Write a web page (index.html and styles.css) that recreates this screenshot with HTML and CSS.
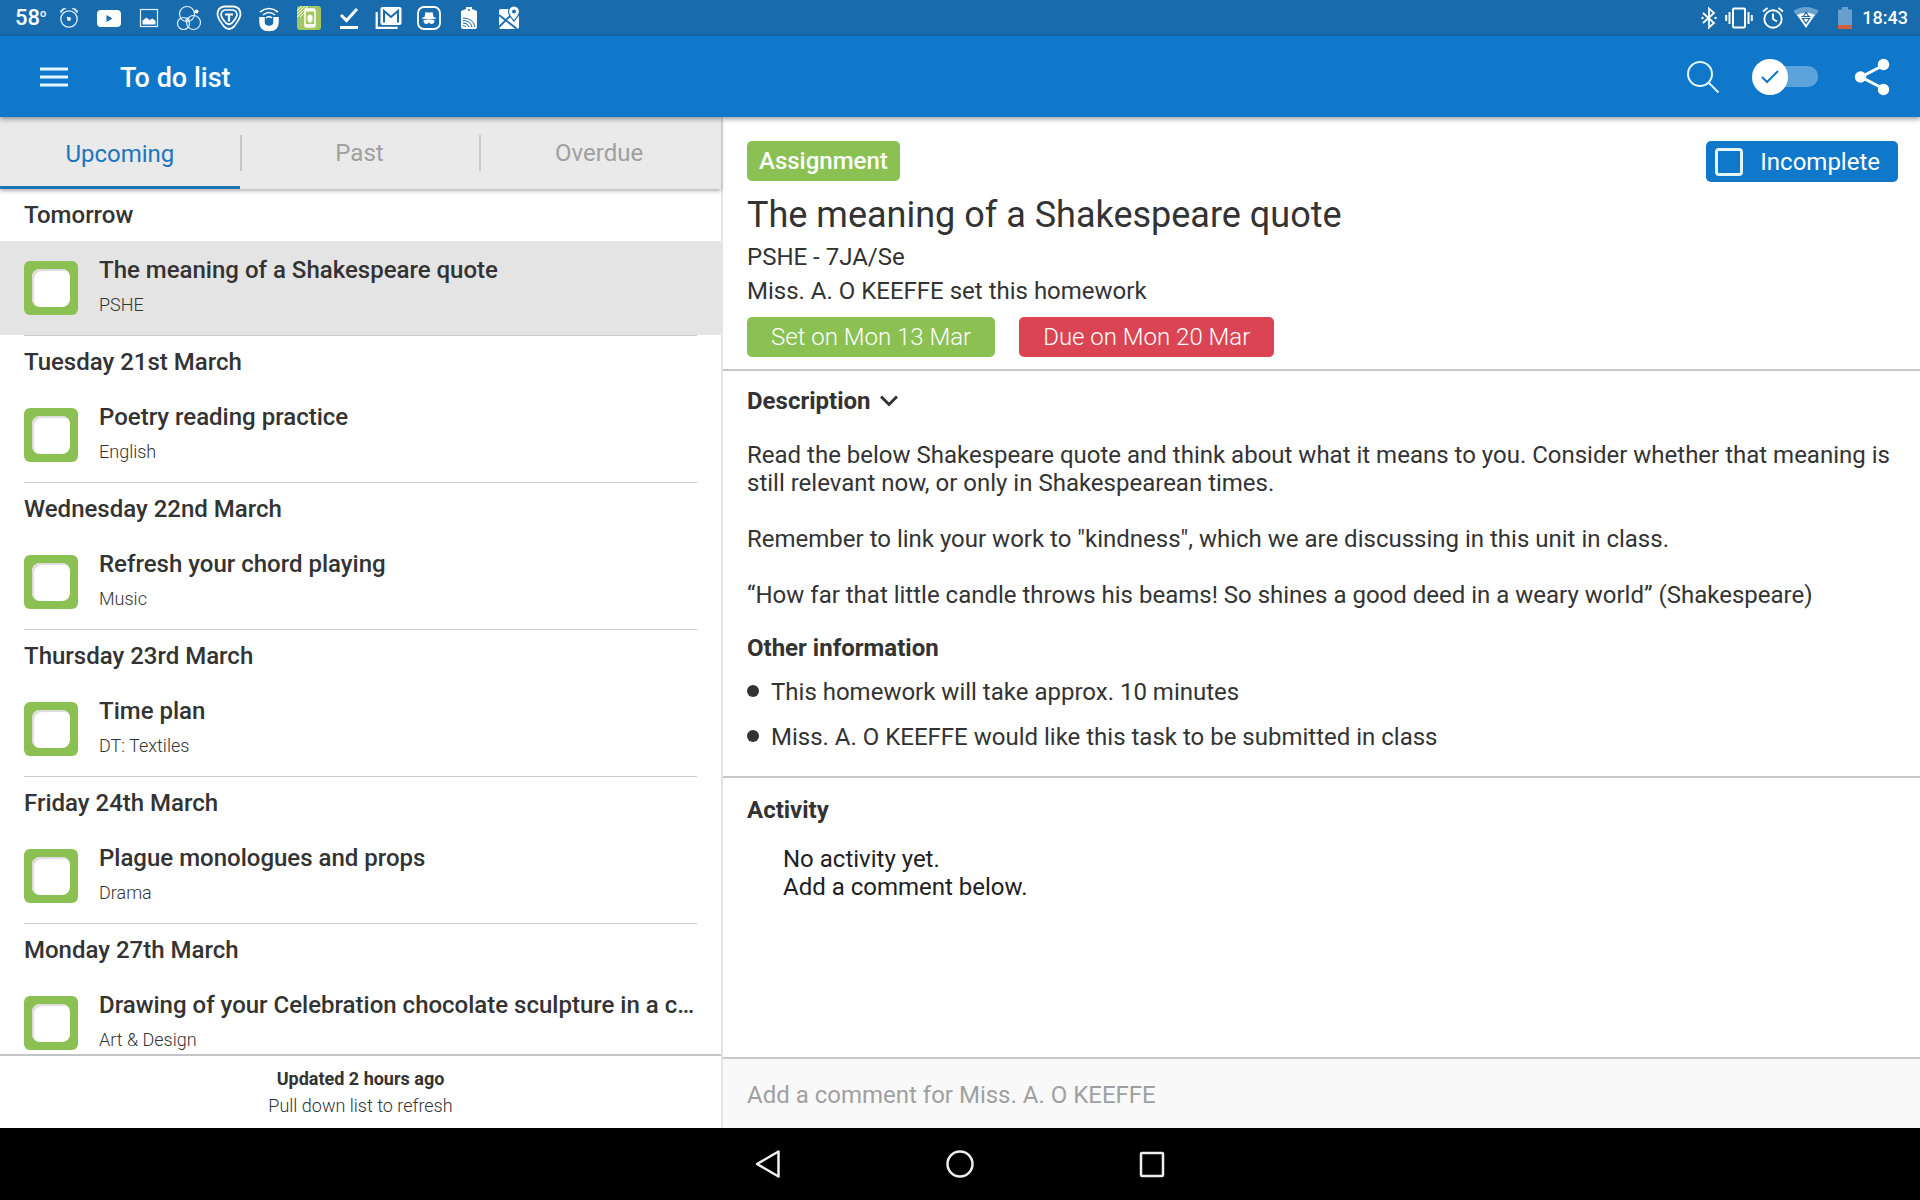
FILE: index.html
```
<!DOCTYPE html>
<html lang="en">
<head>
  <meta charset="UTF-8">
  <meta name="viewport" content="width=device-width, initial-scale=1.0">
  <title>To do list</title>
  <link rel="stylesheet" href="styles.css">
</head>
<body>
  <!-- System status bar -->
  <div class="status-bar">
    <div class="status-left">
      <span class="status-temp">58<sup>o</sup></span>
      <svg width="24" height="24" viewBox="0 0 24 24" fill="none" stroke="#dff1fb" stroke-width="1.3"><circle cx="12" cy="13" r="8.2"/><path d="M4 6l3-3M20 6l-3-3M5 4q1-2 4-1M19 4q-1-2-4-1M4 7V4M20 7V4M10 11l3 3"/><circle cx="12" cy="13" r="1.3" fill="#fff"/></svg>
      <svg width="24" height="24" viewBox="0 0 24 24"><rect y="4" width="24" height="17" rx="4" fill="#fff"/><path d="M9.500 9v7l6-3.500z" fill="#186bad"/></svg>
      <svg width="24" height="24" viewBox="0 0 24 24"><rect x="3.500" y="3.500" width="17" height="17" fill="none" stroke="#dff1fb" stroke-width="1.200"/><path d="M5.500 18.500v-4l4-3 3 2.500 3-1.500 3 2.500v3.500z" fill="#fff"/></svg>
      <svg width="26" height="26" viewBox="0 0 26 26" fill="none" stroke="#dff1fb" stroke-width="1.200"><circle cx="11" cy="9" r="7.500"/><circle cx="7.500" cy="18.500" r="6"/><circle cx="17.500" cy="17.500" r="7"/><circle cx="11.500" cy="14.500" r="1.500"/><circle cx="20.500" cy="6.500" r="2" fill="#fff" stroke="none"/></svg>
      <svg width="26" height="26" viewBox="0 0 26 26" fill="none" stroke="#fff" stroke-linejoin="round"><path stroke-width="1.800" d="M8 1.500h10q6.500 1 6.500 8Q24 14 18 21.500q-5 5-10 0Q2 14 1.500 9.500q0-7 6.500-8z"/><path stroke-width="1.700" d="M9 5h8q4 1 4 5-.5 3-5 8-3 2.500-6 0-4.500-5-5-8 0-4 4-5z"/><path stroke-width="2.200" d="M9 9.500h8M13 9.500v7"/></svg>
      <svg width="22" height="28" viewBox="0 0 22 28" fill="none" stroke="#fff"><path stroke-width="5.500" d="M4 13v5q0 6.500 7 6.500t7-6.500v-5"/><path stroke-width="1.600" d="M2 8q9-7 18 0M5 11q6-5 12 0"/><path stroke-width="1.600" d="M8 14q3-2.500 6 0"/></svg>
      <svg width="24" height="24" viewBox="0 0 24 24"><rect width="24" height="24" rx="3" fill="#a3c85f"/><path d="M0 5l5-5M0 8l8-8M0 11l11-11M3 11l5-5" stroke="#fff"/><rect x="8" y="3" width="10" height="18" rx="1.500" fill="#a3c85f" stroke="#fff" stroke-width="1.500"/><path d="M8 4.500h10M8 19h10" stroke="#fff" stroke-width="2"/><path fill="#fff" d="M10.500 10q2.500-3 5 0v5h-1v1.500h-3V15h-1z"/></svg>
      <svg width="24" height="24" viewBox="0 0 24 24" fill="none" stroke="#fff"><path d="M4 9l5.500 5.500L20 3" stroke-width="3"/><path d="M3 21.500h18" stroke-width="3"/></svg>
      <svg width="27" height="24" viewBox="0 0 27 24" fill="none" stroke="#fff"><path d="M1.200 6v15.800h21" stroke-width="2.200"/><path fill="#fff" stroke="none" d="M7 1h17q2 0 2 2v14q0 2-2 2H7q-2 0-2-2V3q0-2 2-2z"/><path d="M8.500 16.500V5l7 6 7-6v11.500" stroke="#186bad" stroke-width="2"/></svg>
      <svg width="24" height="24" viewBox="0 0 24 24"><rect x="1" y="1" width="22" height="22" rx="6" fill="none" stroke="#fff" stroke-width="1.800"/><path fill="#fff" d="M8.500 6q3.500 1 7 0l1 5q3 .5 3 1.500-7.500 1.500-15 0 0-1 3-1.500zM6.500 14q5.500-1 11 0 0 4-3 4-2 0-2.500-2-.5 2-2.500 2-3 0-3-4z"/></svg>
      <svg width="24" height="24" viewBox="0 0 24 24"><path fill="#fff" d="M4 5l5-2V1h6v2l5 2v16q0 2-2 2H6q-2 0-2-2z"/><path fill="none" stroke="#186bad" d="M6 12q10 0 12 9M6 14.500q7.500 0 9 6.500M6 17q5 0 6 4M6 19.500q2 0 3 1.500"/><circle cx="12" cy="4" r="1" fill="#186bad"/></svg>
      <svg width="24" height="24" viewBox="0 0 24 24"><rect x="2" y="3" width="20" height="20" rx="2" fill="#fff"/><path d="M2 9l18 14M2 21L14 9" stroke="#186bad" stroke-width="1.800" fill="none"/><path d="M17 15q-5.500-6-5.500-9.500a5.500 5.500 0 0 1 11 0Q22.500 9 17 15z" fill="#fff" stroke="#186bad" stroke-width="1.200"/><circle cx="17" cy="5.500" r="2" fill="#186bad"/></svg>
    </div>
    <div class="status-right">
      <svg width="16" height="24" viewBox="0 0 16 24" fill="none" stroke="#fff" stroke-width="1.800"><path d="M2 7l11 10-5 4.500v-19L13 7 2 17"/><circle cx="1.500" cy="12" r="1.200" fill="#fff" stroke="none"/><circle cx="14.500" cy="12" r="1.200" fill="#fff" stroke="none"/></svg>
      <svg width="28" height="24" viewBox="0 0 28 24" fill="none" stroke="#fff" stroke-width="2"><rect x="8" y="2.500" width="12" height="19" rx="1"/><path d="M4.500 6v12M1.200 9v6M23.500 6v12M26.800 9v6"/></svg>
      <svg width="24" height="24" viewBox="0 0 24 24" fill="none" stroke="#fff" stroke-width="1.900"><circle cx="12" cy="13" r="8.700"/><path d="M12 7.500V13l4 2.500M2 5.500L6.500 2M22 5.500L17.500 2"/></svg>
      <svg width="26" height="24" viewBox="0 0 26 24"><path d="M0 5Q13-3 26 5L13 22z" fill="#689fcc"/><path d="M0 5l4 5h18l4-5 0 19H0z" fill="#186bad"/><path d="M4 9q9-5 18 0l-9 13z" fill="#fff"/><path d="M8.500 10.500h9M9.500 12.500h7L13 17.500zM13 6l-3 5M13 6l3 5" fill="none" stroke="#186bad" stroke-width="1.200"/></svg>
      <svg class="battery" width="16" height="24" viewBox="0 0 16 24"><path d="M1 3.500h4V1h6v2.500h4V19H1z" fill="#689fcc"/><path d="M1 19h14v4H1z" fill="#d0603c"/></svg>
      <span class="status-time">18:43</span>
    </div>
  </div>

  <!-- App bar -->
  <header class="app-bar">
    <button class="icon-button" aria-label="Menu">
      <svg width="28" height="22" viewBox="0 0 28 22"><path d="M0 3h28M0 11h28M0 19h28" stroke="#e3f5fd" stroke-width="3"/></svg>
    </button>
    <h1>To do list</h1>
    <div class="app-actions">
      <button class="icon-button" aria-label="Search">
        <svg width="34" height="34" viewBox="0 0 34 34" fill="none" stroke="#e3f5fd" stroke-width="2"><circle cx="14" cy="14" r="12"/><path d="M22.500 22.500l10 10"/></svg>
      </button>
      <label class="toggle">
        <input type="checkbox" aria-label="Show completed">
        <span class="toggle-knob">
          <svg width="18" height="14" viewBox="0 0 18 14" fill="none" stroke="#0f78cb" stroke-width="2"><path d="M1 7l5 5L17 1"/></svg>
        </span>
        <span class="toggle-track"></span>
      </label>
      <button class="icon-button" aria-label="Share">
        <svg width="36" height="38" viewBox="0 0 36 38"><path d="M30 7L7 19l23 12" fill="none" stroke="#fff" stroke-width="3"/><g fill="#fff"><circle cx="29.500" cy="6.500" r="5.700"/><circle cx="6.500" cy="19" r="5.700"/><circle cx="29.500" cy="31.500" r="5.700"/></g></svg>
      </button>
    </div>
  </header>

  <main class="content">
    <!-- Task list -->
    <section class="list-pane">
      <nav class="tabs">
        <button class="tab active">Upcoming</button>
        <button class="tab">Past</button>
        <button class="tab">Overdue</button>
      </nav>

      <div class="task-list">
        <div class="day">
          <h2>Tomorrow</h2>
          <div class="task selected">
            <input type="checkbox" id="task1">
            <label for="task1"><span class="task-title">The meaning of a Shakespeare quote</span><span class="task-subject">PSHE</span></label>
          </div>
        </div>
        <div class="day">
          <h2>Tuesday 21st March</h2>
          <div class="task">
            <input type="checkbox" id="task2">
            <label for="task2"><span class="task-title">Poetry reading practice</span><span class="task-subject">English</span></label>
          </div>
        </div>
        <div class="day">
          <h2>Wednesday 22nd March</h2>
          <div class="task">
            <input type="checkbox" id="task3">
            <label for="task3"><span class="task-title">Refresh your chord playing</span><span class="task-subject">Music</span></label>
          </div>
        </div>
        <div class="day">
          <h2>Thursday 23rd March</h2>
          <div class="task">
            <input type="checkbox" id="task4">
            <label for="task4"><span class="task-title">Time plan</span><span class="task-subject">DT: Textiles</span></label>
          </div>
        </div>
        <div class="day">
          <h2>Friday 24th March</h2>
          <div class="task">
            <input type="checkbox" id="task5">
            <label for="task5"><span class="task-title">Plague monologues and props</span><span class="task-subject">Drama</span></label>
          </div>
        </div>
        <div class="day">
          <h2>Monday 27th March</h2>
          <div class="task">
            <input type="checkbox" id="task6">
            <label for="task6"><span class="task-title">Drawing of your Celebration chocolate sculpture in a c…</span><span class="task-subject">Art &amp; Design</span></label>
          </div>
        </div>
      </div>

      <div class="refresh-info">
        <strong>Updated 2 hours ago</strong>
        <span>Pull down list to refresh</span>
      </div>
    </section>

    <!-- Task detail -->
    <section class="detail-pane">
      <div class="summary">
        <div class="summary-top">
          <span class="badge">Assignment</span>
          <label class="complete-toggle"><input type="checkbox">Incomplete</label>
        </div>
        <h2 class="detail-title">The meaning of a Shakespeare quote</h2>
        <p>PSHE - 7JA/Se</p>
        <p>Miss. A. O KEEFFE set this homework</p>
        <div class="dates">
          <span class="date">Set on Mon 13 Mar</span>
          <span class="date due">Due on Mon 20 Mar</span>
        </div>
      </div>

      <div class="description">
        <button class="description-toggle">Description
          <svg width="18" height="12" viewBox="0 0 18 12" fill="none" stroke="#333" stroke-width="3"><path d="M1 1.500l8 8 8-8"/></svg>
        </button>
        <p>Read the below Shakespeare quote and think about what it means to you. Consider whether that meaning is still relevant now, or only in Shakespearean times.</p>
        <p>Remember to link your work to "kindness", which we are discussing in this unit in class.</p>
        <p>“How far that little candle throws his beams! So shines a good deed in a weary world” (Shakespeare)</p>
        <h3>Other information</h3>
        <ul>
          <li>This homework will take approx. 10 minutes</li>
          <li>Miss. A. O KEEFFE would like this task to be submitted in class</li>
        </ul>
      </div>

      <div class="activity">
        <h3>Activity</h3>
        <p>No activity yet.<br>Add a comment below.</p>
      </div>

      <div class="comment">
        <input type="text" aria-label="Comment" placeholder="Add a comment for Miss. A. O KEEFFE">
      </div>
    </section>
  </main>

  <!-- System navigation -->
  <footer class="nav-bar">
    <button aria-label="Back"><svg width="32" height="32" viewBox="0 0 32 32"><path d="M26.500 3.500v25L5 16z"/></svg></button>
    <button aria-label="Home"><svg width="32" height="32" viewBox="0 0 32 32"><circle cx="16" cy="16" r="12.500"/></svg></button>
    <button aria-label="Recent apps"><svg width="32" height="32" viewBox="0 0 32 32"><rect x="5" y="5" width="22" height="23" rx="1"/></svg></button>
  </footer>
</body>
</html>
```
FILE: styles.css
```
* {
  box-sizing: border-box;
}

body {
  display: flex;
  flex-direction: column;
  height: 100vh;
  margin: 0;
  overflow: hidden;
  background-color: #fff;
  color: #333;
  font-family: Roboto, sans-serif;
  font-size: 24px;
  line-height: 28px;
}

h1, h2, h3, p, ul {
  margin: 0;
  padding: 0;
  font-size: 24px;
}

button {
  border: 0;
  padding: 0;
  background: none;
  color: inherit;
  font: inherit;
}

svg {
  display: block;
  flex: none;
}

/* Status bar */
.status-bar {
  display: flex;
  flex: none;
  justify-content: space-between;
  align-items: center;
  height: 36px;
  padding: 0 12px 0 15px;
  background-color: #186bad;
  color: #fff;
}

.status-left,
.status-right {
  display: flex;
  align-items: center;
  gap: 12px;
}

.status-left svg {
  width: 28px;
}

.status-right {
  gap: 8px;
}

.status-temp {
  width: 28px;
  font-size: 22px;
  font-weight: 500;
  white-space: nowrap;
}

.status-temp sup {
  font-size: 11px;
  line-height: 11px;
}

.status-time {
  margin-left: 1px;
  font-size: 18px;
  font-weight: 500;
}

.battery {
  margin-left: 10px;
}

/* App bar */
.app-bar {
  display: flex;
  flex: none;
  align-items: center;
  height: 81px;
  padding: 0 30px 0 40px;
  background-color: #0f78cb;
  color: #fff;
  box-shadow: 0 2px 5px rgba(0, 0, 0, 0.4);
  position: relative;
  z-index: 2;
}

.app-bar h1 {
  margin-left: 52px;
  padding-top: 2px;
  font-size: 27px;
  font-weight: 500;
}

.app-actions {
  display: flex;
  align-items: center;
  gap: 32px;
  margin-left: auto;
}

.toggle {
  display: flex;
  align-items: center;
  margin-right: 4px;
}

.toggle input {
  appearance: none;
  width: 0;
  margin: 0;
}

.toggle-knob {
  display: flex;
  align-items: center;
  justify-content: center;
  width: 36px;
  height: 36px;
  border-radius: 50%;
  background-color: #fff;
  z-index: 1;
}

.toggle-track {
  width: 48px;
  height: 21px;
  margin-left: -18px;
  border-radius: 10px;
  background-color: #5ca3dc;
}

/* Layout */
.content {
  display: flex;
  flex: 1;
  min-height: 0;
}

.list-pane {
  display: flex;
  flex-direction: column;
  width: 723px;
  flex: none;
  border-right: 2px solid #e4e4e4;
}

/* Tabs */
.tabs {
  display: flex;
  flex: none;
  height: 72px;
  padding-right: 2px;
  background-color: #eaeaea;
  box-shadow: 0 2px 4px rgba(0, 0, 0, 0.3);
  position: relative;
  z-index: 1;
}

.tab {
  flex: 1;
  padding-top: 2px;
  border-bottom: 3px solid transparent;
  background: linear-gradient(#c8c8cc, #c8c8cc) left 18px / 2px 36px no-repeat;
  color: #a0a0a0;
}

.tab.active {
  padding-top: 4px;
  border-bottom-color: #1f74b5;
  background: none;
  color: #1a76c0;
}

/* Task list */
.task-list {
  flex: 1;
  min-height: 0;
  overflow: hidden;
}

.day h2 {
  padding: 12px 24px;
  font-weight: 500;
}

.task {
  display: flex;
  gap: 21px;
  height: 94px;
  padding: 20px 22px 0 24px;
}

.task.selected {
  background-color: #e4e4e4;
}

.day::after {
  content: "";
  display: block;
  height: 1px;
  margin: 0 24px;
  background-color: #ccc;
}

.task input {
  appearance: none;
  flex: none;
  width: 54px;
  height: 54px;
  margin: 0;
  padding: 8px;
  border-radius: 6px;
  background-color: #8bc152;
}

.task input::before {
  content: "";
  display: block;
  height: 38px;
  border-radius: 8px;
  background-color: #fff;
  box-shadow: inset 2px 2px 1px #dcdcdc;
}

.task label {
  flex: 1;
  min-width: 0;
}

.task-title,
.task-subject {
  display: block;
}

.task-title {
  margin-top: -5px;
  overflow: hidden;
  white-space: nowrap;
  text-overflow: ellipsis;
  font-weight: 500;
}

.task-subject {
  margin-top: 7px;
  font-size: 18px;
  font-weight: 300;
}

.refresh-info {
  display: flex;
  flex: none;
  flex-direction: column;
  align-items: center;
  height: 74px;
  padding-top: 9px;
  border-top: 2px solid #c4c4c8;
  font-size: 18px;
  font-weight: 300;
  line-height: 27px;
}

.refresh-info strong {
  font-weight: 700;
}

/* Task detail */
.detail-pane {
  display: flex;
  flex: 1;
  flex-direction: column;
  min-width: 0;
}

.summary {
  padding: 24px 22px 12px 24px;
  border-bottom: 2px solid #c8c8c8;
}

.summary p {
  line-height: 34px;
}

.summary-top {
  display: flex;
  justify-content: space-between;
  align-items: flex-start;
  height: 40px;
}

.badge,
.date,
.complete-toggle {
  display: flex;
  align-items: center;
  height: 40px;
  border-radius: 5px;
  background-color: #8bc152;
  color: #fff;
}

.badge {
  padding: 0 12px;
  font-weight: 500;
}

.complete-toggle {
  gap: 17px;
  height: 41px;
  padding: 0 18px 0 9px;
  background-color: #0f78cb;
}

.complete-toggle input {
  appearance: none;
  width: 28px;
  height: 28px;
  margin: 0;
  border: 3px solid #e3f5fd;
  border-radius: 4px;
}

.detail-title {
  padding: 13px 0 4px;
  font-size: 36px;
  font-weight: 400;
  line-height: 42px;
}

.dates {
  display: flex;
  gap: 24px;
  margin-top: 9px;
}

.date {
  padding: 0 24px;
  font-weight: 300;
}

.date.due {
  background-color: #db4453;
}

.description {
  padding: 16px 24px;
  border-bottom: 2px solid #c8c8c8;
}

.description-toggle {
  display: flex;
  align-items: center;
  gap: 9px;
  margin-bottom: 26px;
  font-weight: 700;
}

.description p {
  margin-bottom: 28px;
}

.description h3 {
  margin-top: -3px;
}

.description ul {
  margin-top: 8px;
  list-style: none;
}

.description li {
  display: flex;
  align-items: center;
  gap: 12px;
  line-height: 45px;
}

.description li::before {
  content: "";
  width: 12px;
  height: 12px;
  margin-bottom: 4px;
  border-radius: 50%;
  background-color: #333;
}

.activity {
  flex: 1;
  padding: 18px 24px;
}

.activity p {
  padding: 21px 36px;
  color: #212121;
}

.comment {
  flex: none;
  height: 71px;
  border-top: 2px solid #c8c8c8;
}

.comment input {
  width: 100%;
  height: 100%;
  padding: 2px 24px 0;
  border: 0;
  background-color: #f9f9f9;
  font: inherit;
}

.comment input::placeholder {
  color: #a0a0a0;
}

/* Navigation bar */
.nav-bar {
  display: flex;
  flex: none;
  justify-content: center;
  align-items: center;
  gap: 160px;
  height: 72px;
  background-color: #000;
}

.nav-bar svg {
  fill: none;
  stroke: #eee;
  stroke-width: 2.5;
  stroke-linejoin: round;
}
```
